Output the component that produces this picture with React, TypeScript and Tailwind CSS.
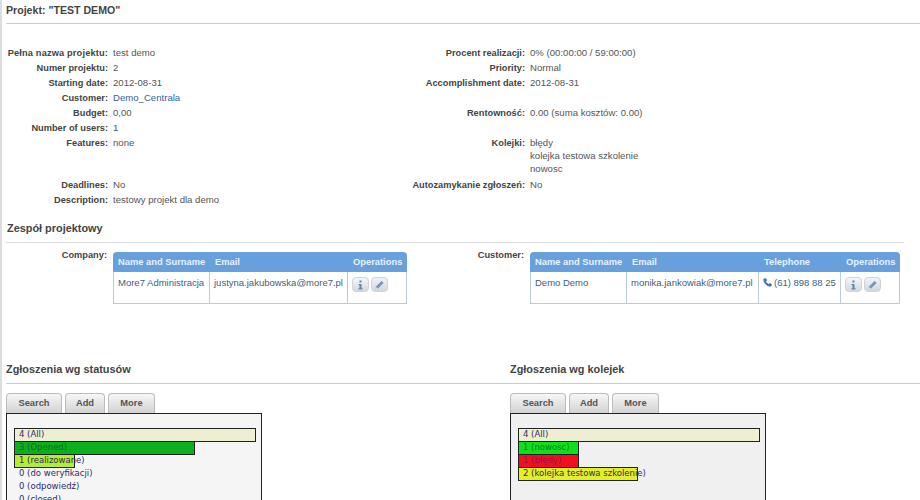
import { Phone } from "lucide-react";

const sans = "font-['Liberation_Sans',Arial,sans-serif]";

function Label({ children, className = "" }: { children?: React.ReactNode; className?: string }) {
  return <div className={`h-[15px] pt-px text-right text-[9.25px] font-bold text-[#444] ${className}`}>{children}</div>;
}

function Heading({ title, className = "" }: { title: string; className?: string }) {
  return <h2 className={`text-[10.9px] font-bold leading-[14px] text-[#444] ${className}`}>{title}</h2>;
}

function IconButtons() {
  return (
    <div className="flex gap-[2px] pt-[2px]">
      <span className="flex h-[15px] w-[17px] items-center justify-center rounded-[4px] border border-[#cfd3d7] bg-gradient-to-b from-[#f6f7f8] to-[#d3d9df]">
        <svg width="7" height="10" viewBox="0 0 7 10">
          <rect x="2.5" y="0.5" width="2" height="2" fill="#5d84aa" />
          <path d="M1.5 4h3v4.2h1V9.5h-4V8.2h1V5.2h-1z" fill="#5d84aa" />
        </svg>
      </span>
      <span className="flex h-[15px] w-[17px] items-center justify-center rounded-[4px] border border-[#cfd3d7] bg-gradient-to-b from-[#f1f3f5] to-[#cfd8e0]">
        <svg width="11" height="10" viewBox="0 0 11 10">
          <path d="M1 9.5l.8-2.8L7.6 1l2 2-5.8 5.7z" fill="#7797b8" />
          <path d="M1 9.5l.8-2.8 2 2z" fill="#e3e9ef" />
        </svg>
      </span>
    </div>
  );
}

interface Column {
  title: string;
  width: string;
}

function PeopleTable({ columns, cells }: { columns: Column[]; cells: React.ReactNode[] }) {
  return (
    <table className="table-fixed border-separate border-spacing-0 text-[9.5px]">
      <colgroup>
        {columns.map((c) => (
          <col key={c.title} className={c.width} />
        ))}
      </colgroup>
      <thead>
        <tr className="h-[20px] bg-[#689fdd] text-left text-[9.35px] font-bold text-[#e9f1fa]">
          {columns.map((c, i) => (
            <th
              key={c.title}
              className={`pl-[5px] font-bold ${i === 0 ? "rounded-tl-[4px]" : ""} ${
                i === columns.length - 1 ? "rounded-tr-[4px]" : ""
              }`}
            >
              {c.title}
            </th>
          ))}
        </tr>
      </thead>
      <tbody>
        <tr className="h-[32px] align-top">
          {cells.map((cell, i) => (
            <td
              key={i}
              className={`border-b border-[#b7cbdc] pl-[4px] pt-[3px] text-[#3d5f80] ${
                i === 0 ? "border-l" : ""
              } border-r`}
            >
              {cell}
            </td>
          ))}
        </tr>
      </tbody>
    </table>
  );
}

interface Bar {
  label: string;
  width?: string;
  color?: string;
  tone?: string;
}

function Chart({ bars, className }: { bars: Bar[]; className: string }) {
  return (
    <div className={`h-[90px] border border-[#222] pl-[7px] pt-[14px] font-['DejaVu_Sans',sans-serif] text-[8.5px] text-[#2b2b6b] ${className}`}>
      {bars.map((b) => (
        <div key={b.label} className="relative h-[13px] leading-[13px]">
          {b.color && <div className={`absolute left-0 top-0 h-[14px] border border-[#222] ${b.width} ${b.color}`} />}
          <span className={`relative ml-[5px] whitespace-nowrap ${b.tone ?? ""}`}>{b.label}</span>
        </div>
      ))}
    </div>
  );
}

function ChartButtons({ widths }: { widths: string[] }) {
  const names = ["Search", "Add", "More"];
  return (
    <div className="flex gap-[3px]">
      {names.map((n, i) => (
        <div
          key={n}
          className={`flex h-[20px] items-center justify-center rounded-t-[4px] border border-b-0 border-[#bbb] bg-gradient-to-b from-[#f7f7f7] to-[#d2d2d2] text-[9.35px] font-bold text-[#555] ${widths[i]}`}
        >
          {n}
        </div>
      ))}
    </div>
  );
}

export default function App() {
  return (
    <div className={`h-[500px] w-[920px] overflow-hidden border-l-2 border-[#ddd] bg-white text-[9.6px] leading-[15px] text-[#555] ${sans}`}>
      <div className="-ml-[2px]">
        <div className="ml-[6px] pt-[3px] text-[10.6px] font-bold leading-[14px] text-[#444]">Projekt: "TEST DEMO"</div>
        <div className="ml-[6px] mt-[6px] h-px bg-[#ccc]" />

        <div className="mt-[21px] grid grid-cols-[108px_267px_140px_1fr] gap-x-[5px]">
          <Label className="tracking-[0.15px]">Pełna nazwa projektu:</Label>
          <div>test demo</div>
          <Label>Procent realizacji:</Label>
          <div>0% (00:00:00 / 59:00:00)</div>

          <Label>Numer projektu:</Label>
          <div>2</div>
          <Label>Priority:</Label>
          <div>Normal</div>

          <Label>Starting date:</Label>
          <div>2012-08-31</div>
          <Label>Accomplishment date:</Label>
          <div>2012-08-31</div>

          <Label>Customer:</Label>
          <div className="text-[#336699]">Demo_Centrala</div>
          <Label />
          <div />

          <Label>Budget:</Label>
          <div>0,00</div>
          <Label>Rentowność:</Label>
          <div>0.00 (suma kosztów: 0.00)</div>

          <Label>Number of users:</Label>
          <div>1</div>
          <Label />
          <div />

          <Label>Features:</Label>
          <div>none</div>
          <Label>Kolejki:</Label>
          <div className="h-[42px] pt-px leading-[13px]">
            <div>błędy</div>
            <div>kolejka testowa szkolenie</div>
            <div>nowosc</div>
          </div>

          <Label>Deadlines:</Label>
          <div>No</div>
          <Label>Autozamykanie zgłoszeń:</Label>
          <div>No</div>

          <Label>Description:</Label>
          <div>testowy projekt dla demo</div>
          <Label />
          <div />
        </div>

        <Heading title="Zespół projektowy" className="ml-[7px] mt-[14px]" />
        <div className="ml-[6px] mt-[7px] h-px w-[898px] bg-[#ddd]" />

        <div className="mt-[9px] flex items-start">
          <div className="-mt-[4px] w-[107px] text-right text-[9.25px] font-bold text-[#444]">Company:</div>
          <div className="ml-[6px] w-[294px]">
            <PeopleTable
              columns={[
                { title: "Name and Surname", width: "w-[97px]" },
                { title: "Email", width: "w-[138px]" },
                { title: "Operations", width: "w-[59px]" },
              ]}
              cells={["More7 Administracja", "justyna.jakubowska@more7.pl", <IconButtons />]}
            />
          </div>
          <div className="-mt-[4px] w-[117px] text-right text-[9.25px] font-bold text-[#444]">Customer:</div>
          <div className="ml-[6px] w-[370px]">
            <PeopleTable
              columns={[
                { title: "Name and Surname", width: "w-[97px]" },
                { title: "Email", width: "w-[132px]" },
                { title: "Telephone", width: "w-[82px]" },
                { title: "Operations", width: "w-[59px]" },
              ]}
              cells={[
                "Demo Demo",
                "monika.jankowiak@more7.pl",
                <span className="flex items-center gap-[2px]">
                  <Phone size={9} className="text-[#3f77a8]" fill="#3f77a8" />
                  (61) 898 88 25
                </span>,
                <IconButtons />,
              ]}
            />
          </div>
        </div>

        <div className="mt-[58px] flex">
          <Heading title="Zgłoszenia wg statusów" className="ml-[6px] w-[504px]" />
          <Heading title="Zgłoszenia wg kolejek" />
        </div>
        <div className="ml-[6px] mt-[7px] h-px bg-[#ccc]" />

        <div className="mt-[9px] flex">
          <div className="ml-[6px] w-[256px]">
            <ChartButtons widths={["w-[56px]", "w-[40px]", "w-[47px]"]} />
            <Chart
              className="bg-[#f5f5f5]"
              bars={[
                { label: "4 (All)", width: "w-[242px]", color: "bg-[#eeeed2]" },
                { label: "3 (Opened)", width: "w-[181px]", color: "bg-[#0cb01c]", tone: "text-[#0a6a2a]" },
                { label: "1 (realizowane)", width: "w-[61px]", color: "bg-[#b4ee2c]" },
                { label: "0 (do weryfikacji)" },
                { label: "0 (odpowiedź)" },
                { label: "0 (closed)" },
              ]}
            />
          </div>
          <div className="ml-[248px] w-[256px]">
            <ChartButtons widths={["w-[56px]", "w-[40px]", "w-[47px]"]} />
            <Chart
              className="bg-[#f0f0f0]"
              bars={[
                { label: "4 (All)", width: "w-[242px]", color: "bg-[#eeeed2]" },
                { label: "1 (nowosc)", width: "w-[61px]", color: "bg-[#0ee01c]", tone: "text-[#0a7a2a]" },
                { label: "1 (błędy)", width: "w-[61px]", color: "bg-[#f01020]", tone: "text-[#a01040]" },
                { label: "2 (kolejka testowa szkolenie)", width: "w-[120px]", color: "bg-[#e4f020]" },
              ]}
            />
          </div>
        </div>
      </div>
    </div>
  );
}
